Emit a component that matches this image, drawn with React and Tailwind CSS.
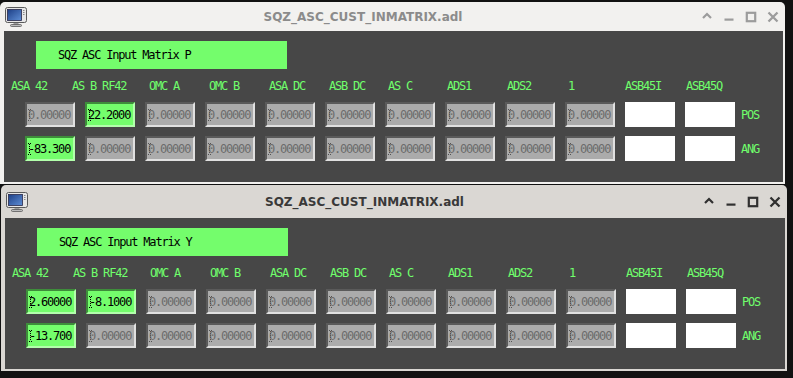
import React from "react";

const LABELS = [
  ["ASA 42", "w-[61px]"],
  ["AS B RF42", "w-[77px]"],
  ["OMC A", "w-[60px]"],
  ["OMC B", "w-[60px]"],
  ["ASA DC", "w-[60px]"],
  ["ASB DC", "w-[59px]"],
  ["AS C", "w-[59px]"],
  ["ADS1", "w-[60px]"],
  ["ADS2", "w-[61px]"],
  ["1", "w-[57px]"],
  ["ASB45I", "w-[61px]"],
  ["ASB45Q", "w-[50px]"],
];

const MONO = { fontFamily: '"DejaVu Sans Mono", "Liberation Mono", monospace' };

function Cursor({ color }) {
  const dots = [];
  for (let y = 1; y < 11; y += 2) dots.push(<rect key={y} x="1" y={y} width="1" height="1" fill={color} />);
  return (
    <svg width="4" height="12" viewBox="0 0 4 12" className="absolute left-[1px] top-1/2 -translate-y-1/2">
      <rect x="0" y="0" width="1" height="1" fill={color} />
      <rect x="2" y="0" width="1" height="1" fill={color} />
      <rect x="0" y="11" width="1" height="1" fill={color} />
      <rect x="2" y="11" width="1" height="1" fill={color} />
      {dots}
    </svg>
  );
}

function Field({ v }) {
  if (v === "white") {
    return <div className="w-[50px] h-[25px] bg-white" />;
  }
  const green = v !== "0.00000";
  const cls = green
    ? "relative w-[50px] h-[25px] bg-[#74fd6c] border-2 border-t-[#3e8d3b] border-l-[#3e8d3b] border-b-[#b2ffab] border-r-[#b2ffab] flex items-center pl-[1px] text-black"
    : "relative w-[50px] h-[25px] bg-[#ababab] border-2 border-t-[#5a5a5a] border-l-[#5a5a5a] border-b-[#e0e0e0] border-r-[#e0e0e0] flex items-center pl-[1px] text-[#6b6b6b]";
  return (
    <div className={cls}>
      <span className="text-[12px] leading-none tracking-[-1.2px] whitespace-nowrap" style={MONO}>
        {v}
      </span>
      <Cursor color={green ? "#000" : "#555"} />
    </div>
  );
}

function Row({ values, label }) {
  return (
    <div className="flex items-center ml-[21px] h-[25px]">
      <div className="flex gap-[10px]">
        {values.map((v, i) => (
          <Field key={i} v={v} />
        ))}
      </div>
      <span className="ml-[6px] text-[12px] leading-none tracking-[-1.2px] text-[#70ff6c]" style={MONO}>
        {label}
      </span>
    </div>
  );
}

function Monitor() {
  return (
    <svg width="22" height="20" viewBox="0 0 22 20">
      <defs>
        <linearGradient id="scr" x1="0" y1="0" x2="1" y2="1">
          <stop offset="0" stopColor="#1d3f86" />
          <stop offset="1" stopColor="#5f8fd6" />
        </linearGradient>
      </defs>
      <rect x="0.5" y="0.5" width="21" height="15" rx="2" fill="#e6e6e6" stroke="#5a5a5a" />
      <rect x="2.5" y="2.5" width="14" height="11" fill="url(#scr)" stroke="#2a2a4a" strokeWidth="0.8" />
      <rect x="18" y="3" width="1.5" height="1" fill="#8a8a8a" />
      <rect x="18" y="5" width="1.5" height="1" fill="#8a8a8a" />
      <rect x="18" y="7" width="1.5" height="1" fill="#8a8a8a" />
      <rect x="8.5" y="16" width="5" height="2" fill="#9a9a9a" />
      <rect x="5.5" y="17.5" width="11" height="2" rx="1" fill="#bcbcbc" stroke="#5a5a5a" strokeWidth="0.8" />
    </svg>
  );
}

function Buttons({ color }) {
  return (
    <div className="flex pr-[1px]">
      <div className="w-[22px] flex justify-center">
        <svg width="12" height="10" viewBox="0 0 12 10">
          <path d="M2 7 L6 3 L10 7" fill="none" stroke={color} strokeWidth="2.2" />
        </svg>
      </div>
      <div className="w-[22px] flex justify-center">
        <svg width="12" height="10" viewBox="0 0 12 10">
          <rect x="1.5" y="7.5" width="9" height="2.2" fill={color} />
        </svg>
      </div>
      <div className="w-[22px] flex justify-center">
        <svg width="12" height="12" viewBox="0 0 12 12">
          <rect x="1.8" y="1.8" width="8.4" height="8.4" fill="none" stroke={color} strokeWidth="2.2" />
        </svg>
      </div>
      <div className="w-[22px] flex justify-center">
        <svg width="12" height="12" viewBox="0 0 12 12">
          <path d="M1.5 1.5 L10.5 10.5 M10.5 1.5 L1.5 10.5" stroke={color} strokeWidth="2.3" />
        </svg>
      </div>
    </div>
  );
}

function Window({ active, title, rows, extra }) {
  const barBg = active ? "bg-[#dad7d3]" : "bg-[#f2f1ef]";
  const titleColor = active ? "text-[#393939]" : "text-[#8b8b8b]";
  const btn = active ? "#303030" : "#9c9c9c";
  return (
    <div className={`${extra} ${barBg} rounded-t-[5px] flex flex-col`}>
      <div className={`flex items-center ${active ? "h-[33px]" : "h-[29px]"}`}>
        <div className="w-[30px] pl-[5px] flex items-center">
          <Monitor />
        </div>
        <div
          className={`flex-1 text-center text-[12px] font-bold ${titleColor}`}
          style={{ fontFamily: '"DejaVu Sans", "Liberation Sans", sans-serif' }}
        >
          SQZ_ASC_CUST_INMATRIX.adl
        </div>
        <Buttons color={btn} />
      </div>
      <div className="ml-[4px] mr-[2px] h-[151px] bg-[#474747] flex flex-col">
        <div
          className="mt-[10px] ml-[32px] w-[251px] h-[28px] bg-[#74fd6c] flex items-center pl-[22px] text-[12px] tracking-[-1.2px] text-black"
          style={MONO}
        >
          {title}
        </div>
        <div className="mt-[11px] ml-[7px] h-[12px] flex items-center">
          {LABELS.map(([t, w]) => (
            <span
              key={t}
              className={`${w} shrink-0 text-[12px] leading-none tracking-[-1.2px] text-[#70ff6c] whitespace-pre`}
              style={MONO}
            >
              {t}
            </span>
          ))}
        </div>
        <div className="mt-[10px] flex flex-col gap-[9px]">
          {rows.map((r, i) => (
            <Row key={i} values={r.values} label={r.label} />
          ))}
        </div>
      </div>
      <div className="h-[2px]" />
    </div>
  );
}

const Z = "0.00000";

export default function App() {
  return (
    <div className="w-[793px] h-[378px] bg-[#121212] overflow-hidden flex flex-col pt-[2px]">
      <Window
        active={false}
        extra="w-[785px]"
        title="SQZ ASC Input Matrix P"
        rows={[
          { values: [Z, "22.2000", Z, Z, Z, Z, Z, Z, Z, Z, "white", "white"], label: "POS" },
          { values: ["-83.300", Z, Z, Z, Z, Z, Z, Z, Z, Z, "white", "white"], label: "ANG" },
        ]}
      />
      <Window
        active={true}
        extra="w-[786px] ml-[1px] mt-[1px]"
        title="SQZ ASC Input Matrix Y"
        rows={[
          { values: ["2.60000", "-8.1000", Z, Z, Z, Z, Z, Z, Z, Z, "white", "white"], label: "POS" },
          { values: ["-13.700", Z, Z, Z, Z, Z, Z, Z, Z, Z, "white", "white"], label: "ANG" },
        ]}
      />
    </div>
  );
}
